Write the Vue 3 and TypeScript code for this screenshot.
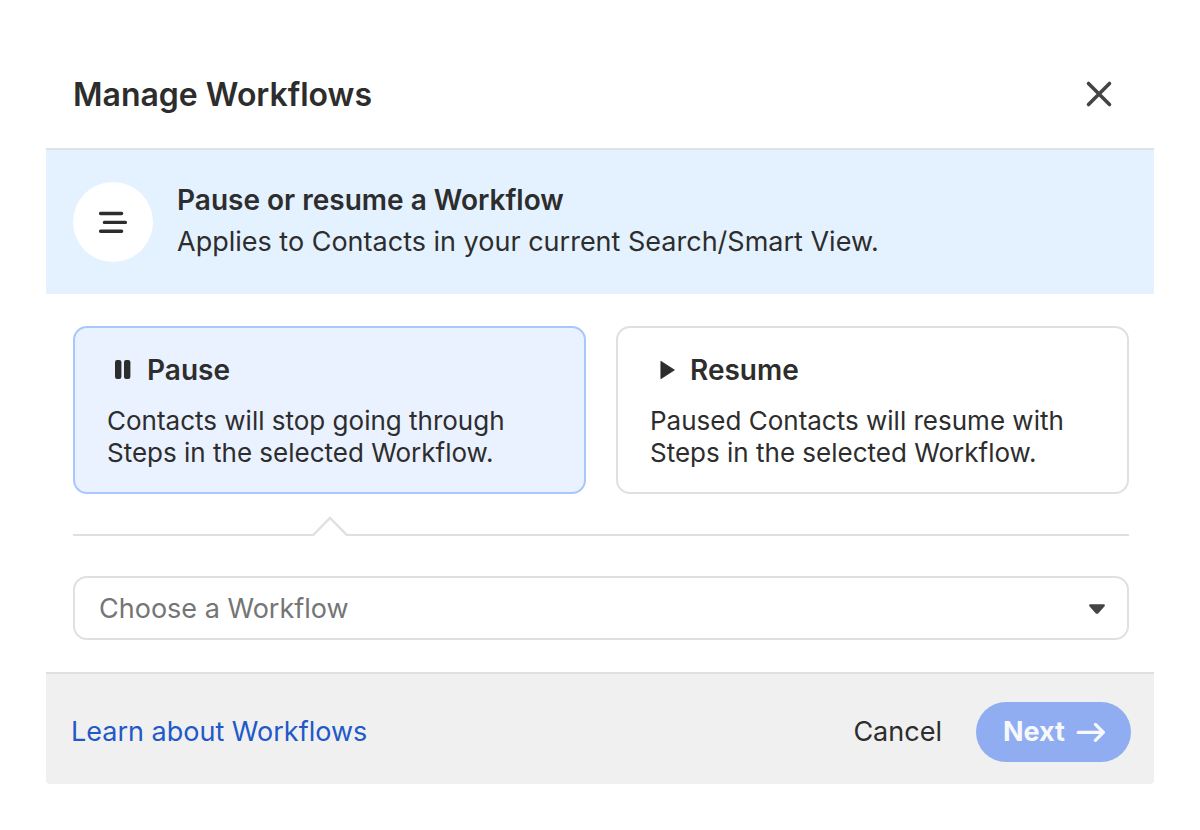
<script setup lang="ts">
import { ref } from 'vue'

type Action = 'pause' | 'resume'

interface Choice {
  value: Action
  title: string
  lines: string[]
}

const choices: Choice[] = [
  {
    value: 'pause',
    title: 'Pause',
    lines: ['Contacts will stop going through', 'Steps in the selected Workflow.'],
  },
  {
    value: 'resume',
    title: 'Resume',
    lines: ['Paused Contacts will resume with', 'Steps in the selected Workflow.'],
  },
]

const action = ref<Action>('pause')
const workflow = ref('')
</script>

<template>
  <main class="page">
    <section class="dialog" role="dialog" aria-labelledby="dialog-title">
      <header class="header">
        <h1 id="dialog-title" class="title">Manage Workflows</h1>
        <button class="close" type="button" aria-label="Close">
          <svg width="28" height="28" viewBox="0 0 28 28" aria-hidden="true">
            <path d="M3.5 3.5 24.5 24.5M24.5 3.5 3.5 24.5" fill="none" stroke="#444" stroke-width="3.6" stroke-linecap="round" />
          </svg>
        </button>
      </header>

      <div class="banner">
        <span class="badge">
          <svg width="32" height="32" viewBox="0 0 32 32" aria-hidden="true">
            <path d="M3.6 7.5H24.6M7.4 16.4H28.4M3.6 25.2H24.6" fill="none" stroke="#2d2d2d" stroke-width="3.4" stroke-linecap="round" />
          </svg>
        </span>
        <div>
          <h2 class="banner-title">Pause or resume a Workflow</h2>
          <p class="banner-text">Applies to Contacts in your current Search/Smart View.</p>
        </div>
      </div>

      <div class="body">
        <div class="choices" role="radiogroup" aria-label="Action">
          <label
            v-for="choice in choices"
            :key="choice.value"
            class="choice"
            :class="{ selected: action === choice.value }"
          >
            <input v-model="action" class="radio" type="radio" name="action" :value="choice.value" />
            <span class="choice-head">
              <svg v-if="choice.value === 'pause'" width="32" height="32" viewBox="0 0 32 32" aria-hidden="true">
                <rect x="8" y="6" width="6.4" height="19" rx="2.2" fill="#2d2d2d" />
                <rect x="17" y="6" width="6.4" height="19" rx="2.2" fill="#2d2d2d" />
              </svg>
              <svg v-else width="32" height="32" viewBox="0 0 32 32" aria-hidden="true">
                <path d="M10.9 7.3 24.4 16 10.9 24.7Z" fill="#2d2d2d" stroke="#2d2d2d" stroke-width="0.8" stroke-linejoin="round" />
              </svg>
              <span class="choice-title">{{ choice.title }}</span>
            </span>
            <span class="choice-text">
              <span v-for="line in choice.lines" :key="line" class="line">{{ line }}</span>
            </span>
          </label>
        </div>

        <div class="divider">
          <svg class="notch" :class="action" width="36" height="20" viewBox="0 0 36 20" aria-hidden="true">
            <path d="M0 20 1.5 19 18 2 34.5 19 36 20Z" fill="#fff" />
            <path d="M0 19H1.2L18 2 34.8 19H36" fill="none" stroke="#e0e0e0" stroke-width="2.4" />
          </svg>
        </div>

        <div class="picker">
          <select v-model="workflow" class="select" aria-label="Workflow">
            <option value="">Choose a Workflow</option>
          </select>
          <svg class="caret" width="16" height="10" viewBox="0 0 16 10" aria-hidden="true">
            <path d="M1 1H15V1.8L8.8 8.6Q8 9.4 7.2 8.6L1 1.8Z" fill="#444" stroke="#444" stroke-width="1.6" stroke-linejoin="round" />
          </svg>
        </div>
      </div>

      <footer class="footer">
        <a class="learn" href="#workflows">Learn about Workflows</a>
        <div class="actions">
          <button class="cancel" type="button">Cancel</button>
          <button class="next" type="button">
            Next
            <svg width="30" height="20" viewBox="0 0 30 20" aria-hidden="true">
              <path d="M2.2 10.4H27M19.4 2.4 27.4 10.4 19.4 18.4" fill="none" stroke="#f7f8fb" stroke-width="3.2" stroke-linecap="round" stroke-linejoin="round" />
            </svg>
          </button>
        </div>
      </footer>
    </section>
  </main>
</template>

<style>
body {
  margin: 0;
  background: #fff;
}
</style>

<style scoped>
* {
  box-sizing: border-box;
}

.page {
  padding: 40px 46px;
  font-family: Inter, "Liberation Sans", sans-serif;
  font-size: 27px;
  line-height: 42px;
  color: #2d2d2d;
}

.page svg {
  display: block;
  flex: none;
}

h1,
h2,
p {
  margin: 0;
}

button {
  font: inherit;
  color: inherit;
  border: 0;
  background: none;
  cursor: pointer;
}

.dialog {
  border-radius: 4px;
  overflow: hidden;
}

.header {
  display: flex;
  align-items: center;
  justify-content: space-between;
  height: 108px;
  padding: 0 41px 0 27px;
}

.title {
  padding-top: 2px;
  font-size: 32px;
  font-weight: 600;
}

.close {
  padding: 0;
}

.banner {
  display: flex;
  align-items: center;
  gap: 24px;
  padding: 29px 27px 31px;
  border-top: 2px solid #dfe1e3;
  background: #e4f2ff;
}

.badge {
  display: flex;
  align-items: center;
  justify-content: center;
  flex: none;
  width: 80px;
  height: 80px;
  margin-top: 2px;
  border-radius: 50%;
  background: #fff;
}

.banner-title {
  font-size: 28px;
  font-weight: 600;
}

.body {
  padding: 32px 25px 32px 27px;
}

.choices {
  display: grid;
  grid-template-columns: 1fr 1fr;
  gap: 30px;
}

.choice {
  position: relative;
  display: block;
  padding: 26px 32px 23px;
  border: 2px solid #e0e0e0;
  border-radius: 14px;
  cursor: pointer;
}

.choice.selected {
  border-color: #a8c7ff;
  background: #eaf1ff;
}

.radio {
  position: absolute;
  opacity: 0;
}

.choice-head {
  display: flex;
  align-items: center;
  gap: 8px;
  margin-bottom: 19px;
  line-height: 32px;
}

.choice-title {
  font-size: 28px;
  font-weight: 600;
}

.choice-text {
  display: block;
  font-size: 26px;
  line-height: 32px;
}

.line {
  display: block;
}

.divider {
  position: relative;
  height: 2px;
  margin: 40px 0;
  background: #e0e0e0;
}

.notch {
  position: absolute;
  bottom: 0;
}

.notch.pause {
  left: calc(25% - 25px);
}

.notch.resume {
  right: calc(25% - 25px);
}

.picker {
  position: relative;
}

.select {
  display: block;
  width: 100%;
  height: 64px;
  padding: 2px 60px 0 24px;
  border: 2px solid #e0e0e0;
  border-radius: 14px;
  background: #fff;
  color: #757575;
  font: inherit;
  appearance: none;
}

.caret {
  position: absolute;
  top: 28px;
  right: 24px;
  pointer-events: none;
}

.footer {
  display: flex;
  align-items: center;
  justify-content: space-between;
  padding: 28px 23px 22px 25px;
  border-top: 2px solid #e0e0e0;
  background: #f0f0f0;
}

.learn {
  color: #2159c9;
  text-decoration: none;
}

.actions {
  display: flex;
  align-items: center;
  gap: 34px;
}

.cancel {
  padding: 0;
}

.next {
  display: flex;
  align-items: center;
  gap: 11px;
  height: 60px;
  padding: 0 25px 0 27px;
  border-radius: 30px;
  background: #90adf2;
  color: #f7f8fb;
  font-weight: 700;
}
</style>
